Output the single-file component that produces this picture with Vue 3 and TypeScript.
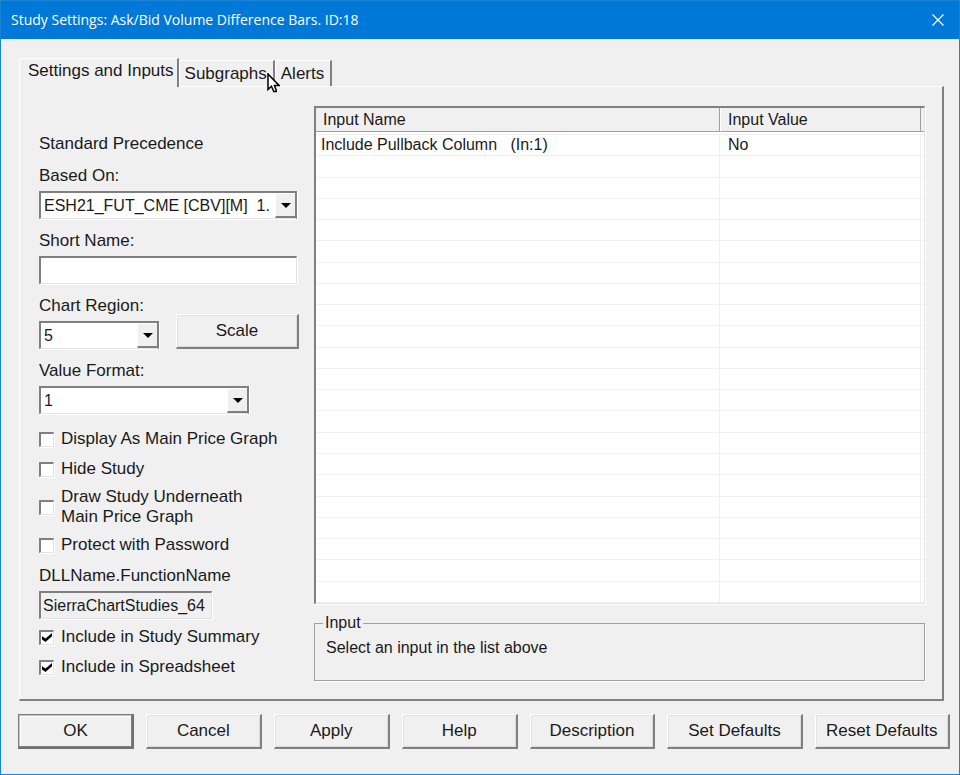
<script setup lang="ts">
import { ref } from 'vue'

interface InputRow {
  name: string
  value: string
}

interface Action {
  label: string
  weight: number
  isDefault?: boolean
}

const tabs = ['Settings and Inputs', 'Subgraphs', 'Alerts']
const activeTab = ref('Settings and Inputs')
const hoveredTab = 'Subgraphs'

const VISIBLE_ROWS = 22
const inputs: InputRow[] = [{ name: 'Include Pullback Column\u00a0\u00a0 (In:1)', value: 'No' }]
const rows: InputRow[] = Array.from({ length: VISIBLE_ROWS }, (_, i) => inputs[i] ?? { name: '', value: '' })

const actions: Action[] = [
  { label: 'OK', weight: 116, isDefault: true },
  { label: 'Cancel', weight: 116 },
  { label: 'Apply', weight: 116 },
  { label: 'Help', weight: 116 },
  { label: 'Description', weight: 126 },
  { label: 'Set Defaults', weight: 136 },
  { label: 'Reset Defaults', weight: 136 },
]

const basedOn = ref('ESH21_FUT_CME [CBV][M]\u00a0 1.')
const shortName = ref('')
const chartRegion = ref('5')
const valueFormat = ref('1')
const functionName = ref('SierraChartStudies_64')
const displayAsMain = ref(false)
const hideStudy = ref(false)
const drawUnderneath = ref(false)
const protect = ref(false)
const inSummary = ref(true)
const inSpreadsheet = ref(true)
</script>

<template>
  <main class="dialog">
    <header class="titlebar">
      <h1 class="title">Study Settings: Ask/Bid Volume Difference Bars. ID:18</h1>
      <button class="close" type="button" aria-label="Close">
        <svg width="12" height="12" viewBox="0 0 12 12" aria-hidden="true">
          <path d="M0.5 0.5L11.5 11.5M11.5 0.5L0.5 11.5" fill="none" stroke="#fff" stroke-width="1.2" />
        </svg>
      </button>
    </header>

    <div class="content">
      <nav class="tabs" role="tablist">
        <button
          v-for="tab in tabs"
          :key="tab"
          type="button"
          role="tab"
          class="tab"
          :class="{ active: tab === activeTab }"
          :aria-selected="tab === activeTab"
          @click="activeTab = tab"
        >
          {{ tab }}
          <svg v-if="tab === hoveredTab" class="pointer" width="13" height="20" viewBox="0 0 13 20" aria-hidden="true">
            <path
              d="M1 1V16.5L4.4 13.3L6.8 18.6H9.2V17.2L7.4 12.4H12L1 1Z"
              fill="#fff"
              stroke="#000"
              stroke-width="1.5"
              stroke-linejoin="miter"
            />
          </svg>
        </button>
      </nav>

      <section class="panel">
        <form class="settings" @submit.prevent>
          <p class="heading">Standard Precedence</p>

          <div class="field">
            <label for="based-on">Based On:</label>
            <div class="combo wide">
              <select id="based-on" v-model="basedOn">
                <option>{{ basedOn }}</option>
              </select>
              <span class="drop"><svg width="10" height="5" viewBox="0 0 10 5"><path d="M0 0H10L5 5Z" /></svg></span>
            </div>
          </div>

          <div class="field">
            <label for="short-name">Short Name:</label>
            <input id="short-name" v-model="shortName" class="text" type="text" />
          </div>

          <div class="pair">
            <div class="field">
              <label for="chart-region">Chart Region:</label>
              <div class="combo small">
                <select id="chart-region" v-model="chartRegion">
                  <option>5</option>
                </select>
                <span class="drop"><svg width="10" height="5" viewBox="0 0 10 5"><path d="M0 0H10L5 5Z" /></svg></span>
              </div>
            </div>
            <button class="btn scale" type="button">Scale</button>
          </div>

          <div class="field">
            <label for="value-format">Value Format:</label>
            <div class="combo medium">
              <select id="value-format" v-model="valueFormat">
                <option>1</option>
              </select>
              <span class="drop"><svg width="10" height="5" viewBox="0 0 10 5"><path d="M0 0H10L5 5Z" /></svg></span>
            </div>
          </div>

          <div class="checks">
            <label class="check"><input v-model="displayAsMain" type="checkbox" /><span>Display As Main Price Graph</span></label>
            <label class="check"><input v-model="hideStudy" type="checkbox" /><span>Hide Study</span></label>
            <label class="check double"><input v-model="drawUnderneath" type="checkbox" /><span>Draw Study Underneath<br />Main Price Graph</span></label>
            <label class="check"><input v-model="protect" type="checkbox" /><span>Protect with Password</span></label>
          </div>

          <div class="field function">
            <label for="function-name">DLLName.FunctionName</label>
            <input id="function-name" v-model="functionName" class="text readonly" type="text" readonly />
          </div>

          <div class="checks last">
            <label class="check"><input v-model="inSummary" type="checkbox" /><span>Include in Study Summary</span></label>
            <label class="check"><input v-model="inSpreadsheet" type="checkbox" /><span>Include in Spreadsheet</span></label>
          </div>
        </form>

        <div class="inputs">
          <div class="list">
            <table>
              <colgroup>
                <col />
                <col class="col-value" />
                <col class="col-rest" />
              </colgroup>
              <thead>
                <tr>
                  <th scope="col">Input Name</th>
                  <th scope="col">Input Value</th>
                  <td></td>
                </tr>
                <tr class="rule" aria-hidden="true">
                  <td colspan="3"></td>
                </tr>
              </thead>
              <tbody>
                <tr v-for="(row, i) in rows" :key="i">
                  <td>{{ row.name }}</td>
                  <td>{{ row.value }}</td>
                  <td></td>
                </tr>
              </tbody>
            </table>
          </div>

          <fieldset class="group">
            <legend>Input</legend>
            <p>Select an input in the list above</p>
          </fieldset>
        </div>
      </section>
    </div>

    <footer class="actions">
      <button
        v-for="action in actions"
        :key="action.label"
        type="button"
        class="btn"
        :class="{ primary: action.isDefault }"
        :style="{ flexGrow: action.weight }"
      >
        {{ action.label }}
      </button>
    </footer>
  </main>
</template>

<style>
body {
  margin: 0;
  background: #f0f0f0;
}
</style>

<style scoped>
* {
  box-sizing: border-box;
}

.dialog {
  display: flex;
  flex-direction: column;
  min-height: 100vh;
  border: 1px solid #1883d7;
  background: #f0f0f0;
  color: #1a1a1a;
  font-family: 'Liberation Sans', Arial, sans-serif;
  font-size: 17px;
  line-height: 20px;
}

button,
input,
select {
  margin: 0;
  color: inherit;
  font: inherit;
}

p {
  margin: 0;
}

.titlebar {
  display: flex;
  justify-content: space-between;
  align-items: center;
  height: 38px;
  padding-left: 10px;
  background: #0078d7;
  color: #fff;
}

.title {
  margin: 0;
  font-family: 'Open Sans', 'Noto Sans', sans-serif;
  font-size: 14px;
  font-weight: 400;
}

.close {
  display: grid;
  place-items: center;
  width: 42px;
  height: 38px;
  padding: 0;
  border: 0;
  background: transparent;
}

.content {
  display: flex;
  flex: 1;
  flex-direction: column;
  padding: 19px 15px 0 18px;
}

.tabs {
  display: flex;
  align-items: flex-end;
  height: 28px;
}

.tab {
  position: relative;
  height: 26px;
  padding: 0 6px 0 5px;
  border: 1px solid #fff;
  border-right: 2px solid #808080;
  border-bottom: 0;
  border-top-left-radius: 2px;
  background: #f0f0f0;
  white-space: nowrap;
}

.tab.active {
  height: 29px;
  margin-bottom: -1px;
  padding: 0 3px 4px 8px;
}

.pointer {
  position: absolute;
  z-index: 1;
  top: 12px;
  right: -7px;
}

.panel {
  display: grid;
  flex: 1;
  grid-template-columns: 260px 1fr;
  gap: 15px;
  padding: 19px 17px 18px 19px;
  border: 1px solid #fff;
  border-right: 2px solid #808080;
  border-bottom: 2px solid #808080;
}

.settings {
  display: flex;
  flex-direction: column;
  gap: 12px;
  padding-top: 28px;
}

.field {
  display: flex;
  flex-direction: column;
  gap: 5px;
}

.pair {
  display: flex;
  justify-content: space-between;
  align-items: flex-end;
}

.combo {
  position: relative;
  height: 28px;
  border: 2px solid #808080;
  border-bottom: 1px solid #e3e3e3;
  background: #fff;
  box-shadow: 1px 1px #fff;
}

.wide {
  width: 258px;
}

.medium {
  width: 210px;
}

.small {
  width: 120px;
}

.combo select {
  width: 100%;
  height: 100%;
  padding: 0 20px 0 3px;
  border: 0;
  border-radius: 0;
  background: transparent;
  font-size: 16px;
  appearance: none;
  text-overflow: clip;
}

.drop {
  position: absolute;
  top: 0;
  right: 0;
  bottom: 0;
  display: grid;
  place-items: center;
  width: 20px;
  border: 1px solid #fff;
  border-right: 0;
  border-bottom: 2px solid #808080;
  background: #f0f0f0;
  pointer-events: none;
}

.text {
  width: 258px;
  height: 28px;
  padding: 0 2px;
  border: 2px solid #808080;
  border-right: 1px solid #e3e3e3;
  border-bottom: 1px solid #e3e3e3;
  border-radius: 0;
  background: #fff;
  box-shadow: 1px 1px #fff;
  font-size: 16px;
}

.readonly {
  width: 173px;
  background: #f0f0f0;
}

.btn {
  height: 35px;
  padding: 0;
  border: 1px solid #fff;
  border-right: 2px solid #808080;
  border-bottom: 2px solid #808080;
  border-radius: 0;
  background: #f0f0f0;
  box-shadow: inset 1px 1px #e3e3e3, inset -1px -1px #dcdcdc;
  white-space: nowrap;
}

.scale {
  width: 123px;
}

.checks {
  display: flex;
  flex-direction: column;
  gap: 10px;
  padding-top: 3px;
}

.check {
  display: flex;
  align-items: center;
  gap: 7px;
}

.check.double {
  margin: -2px 0;
}

.check input {
  display: grid;
  place-items: center;
  width: 15px;
  height: 15px;
  border: 2px solid #808080;
  border-right: 1px solid #e3e3e3;
  border-bottom: 1px solid #e3e3e3;
  background: #fff;
  box-shadow: 1px 1px #fff;
  appearance: none;
}

.check input:checked::before {
  width: 10px;
  height: 9px;
  background: #000;
  clip-path: polygon(0 35%, 35% 62%, 100% 0, 100% 35%, 35% 100%, 0 72%);
  content: '';
}

.function {
  margin-top: -1px;
}

.last {
  margin-top: -7px;
}

.inputs {
  display: flex;
  flex-direction: column;
  gap: 9px;
}

.list {
  display: grid;
  flex: 1;
  border: 2px solid #808080;
  border-right: 1px solid #e3e3e3;
  border-bottom: 1px solid #e3e3e3;
  background: #fff;
  box-shadow: 1px 1px #fff;
}

table {
  width: 100%;
  height: 100%;
  border-collapse: separate;
  border-spacing: 0;
  table-layout: fixed;
  font-size: 16px;
}

.col-value {
  width: 201px;
}

.col-rest {
  width: 3px;
}

th,
thead td {
  height: 24px;
  padding: 1px 7px 0;
  border-right: 1px solid #a0a0a0;
  border-bottom: 1px solid #a0a0a0;
  background: #f0f0f0;
  font-weight: 400;
  text-align: left;
}

th + th {
  border-left: 1px solid #fff;
}

thead td {
  padding: 0;
  border-right: 0;
}

.rule td {
  height: 3px;
  border-bottom: 1px solid #f0f0f0;
  background: #fff;
}

tbody td {
  height: 21px;
  padding: 0 5px;
  border-right: 1px solid #f0f0f0;
  border-bottom: 1px solid #f0f0f0;
  line-height: 20px;
  white-space: nowrap;
}

tbody td + td {
  padding: 0 8px;
}

tbody td:last-child {
  padding: 0;
  border-right: 0;
}

.group {
  min-width: 0;
  margin: 0;
  padding: 5px 11px 22px;
  border: 1px solid #a0a0a0;
  box-shadow: 1px 1px #fff;
  font-size: 16px;
}

.group legend {
  margin-left: -3px;
  padding: 0 2px;
}

.actions {
  display: flex;
  gap: 12px;
  padding: 13px 9px 25px 17px;
}

.actions .btn {
  flex-basis: 0;
}

.btn.primary {
  border: 1px solid #808080;
  border-right: 2px solid #707070;
  border-bottom: 2px solid #707070;
  box-shadow: inset -1px -1px #808080, inset 1px 1px #c0c0c0, inset 2px 2px #fff;
}
</style>
